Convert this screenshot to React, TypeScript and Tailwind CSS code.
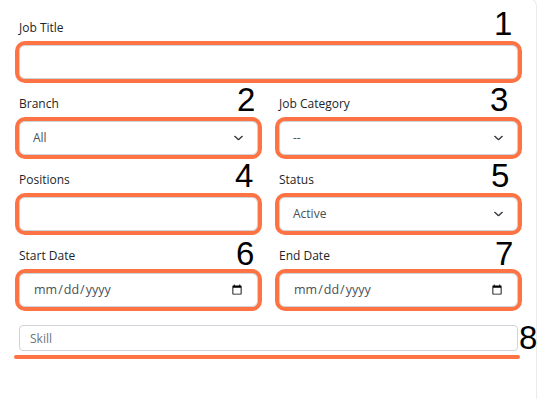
import React from "react";

const ORANGE = "outline outline-[4px] outline-offset-0 outline-[#fe7344]";

function Chevron() {
  return (
    <svg
      className="pointer-events-none absolute right-[14px] top-1/2 -translate-y-1/2"
      width="9"
      height="5"
      viewBox="0 0 9 5"
      fill="none"
    >
      <path d="M0.8 0.8l3.7 3.4 3.7-3.4" stroke="#343a40" strokeWidth="1.4" strokeLinecap="round" strokeLinejoin="round" />
    </svg>
  );
}

function Label({ children }: { children: React.ReactNode }) {
  return <div className="h-[18px] mb-[8px] text-[12px] leading-[18px] text-[#212529]">{children}</div>;
}

function SelectField({ label, value }: { label: string; value: string }) {
  return (
    <div>
      <Label>{label}</Label>
      <div className={`relative h-[34px] rounded-[6px] border border-[#cfd3d8] bg-white ${ORANGE}`}>
        <div className="h-full flex items-center pl-[13px] text-[12px] text-[#495057]">{value}</div>
        <Chevron />
      </div>
    </div>
  );
}

function TextField({ label }: { label: string }) {
  return (
    <div>
      <Label>{label}</Label>
      <input
        type="text"
        className={`block w-full h-[34px] rounded-[6px] border border-[#cfd3d8] bg-white ${ORANGE}`}
      />
    </div>
  );
}

function DateField({ label }: { label: string }) {
  return (
    <div>
      <Label>{label}</Label>
      <input
        type="date"
        className={`block w-full h-[34px] rounded-[6px] border border-[#cfd3d8] bg-white pl-[13px] pr-[12px] text-[12.5px] text-[#495057] ${ORANGE}`}
        style={{ fontFamily: "'Open Sans', sans-serif" }}
      />
    </div>
  );
}

const nums: { n: string; left: number; top: number }[] = [
  { n: "1", left: 494, top: 7 },
  { n: "2", left: 237, top: 83 },
  { n: "3", left: 490, top: 83 },
  { n: "4", left: 235, top: 159 },
  { n: "5", left: 491, top: 159 },
  { n: "6", left: 236, top: 237 },
  { n: "7", left: 495, top: 237 },
  { n: "8", left: 519, top: 321 },
];

export default function App() {
  return (
    <div
      className="relative w-[542px] h-[401px] bg-white overflow-hidden"
      style={{ fontFamily: "'Open Sans', 'Noto Sans', sans-serif" }}
    >
      <div className="w-[537px] h-full border-r border-t border-[#ebebeb] rounded-tr-[8px] -mt-[2px] pl-[19px] pt-[20px]">
        <div className="w-[499px] flex flex-col gap-[16px]">
          <TextField label="Job Title" />
          <div className="grid grid-cols-2 gap-x-[21px] gap-y-[16px]">
            <SelectField label="Branch" value="All" />
            <SelectField label="Job Category" value="--" />
            <TextField label="Positions" />
            <SelectField label="Status" value="Active" />
            <DateField label="Start Date" />
            <DateField label="End Date" />
          </div>
          <div className="relative mt-[2px]">
            <input
              type="text"
              placeholder="Skill"
              className="block w-full h-[26px] rounded-[4px] border border-[#cfd3d8] bg-white pl-[10px] text-[12px] text-[#495057] placeholder:text-[#6c757d]"
            />
            <div className="absolute left-[-5px] right-[-2px] -bottom-[8px] h-[4px] rounded-full bg-[#fe7344]" />
          </div>
        </div>
      </div>
      {nums.map((d) => (
        <div
          key={d.n}
          className="absolute text-[33px] leading-none text-black"
          style={{ left: d.left, top: d.top, fontFamily: "'Liberation Sans', Arial, sans-serif" }}
        >
          {d.n}
        </div>
      ))}
    </div>
  );
}
